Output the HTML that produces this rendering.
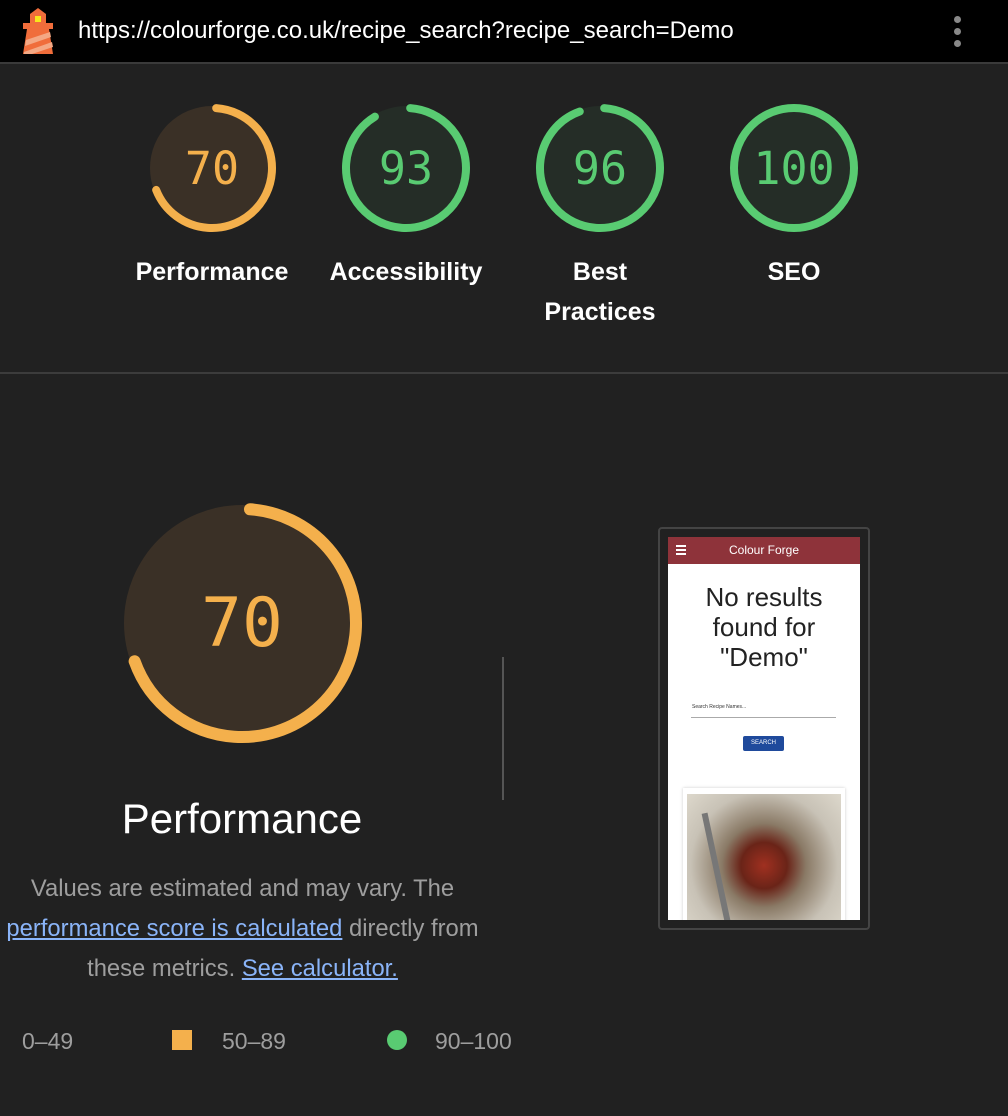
<!DOCTYPE html>
<html><head><meta charset="utf-8"><style>
body{margin:0;width:1008px;height:1116px;background:#212121;position:relative;overflow:hidden;font-family:"Liberation Sans",Arial,sans-serif}
.a{position:absolute}
.lbl{position:absolute;color:#fff;font-size:25px;text-align:center;width:200px;line-height:40px;font-weight:bold}
</style></head><body>
<div class="a" style="left:0;top:0;width:1008px;height:62px;background:#000;border-bottom:2px solid #3a3a3a"></div>
<svg class="a" style="left:22px;top:6px" width="32" height="50" viewBox="0 0 32 50">
<polygon points="8,8 16,2 24,8 24,17 8,17" fill="#f06d3b"/>
<rect x="13" y="10" width="6" height="6" fill="#f8e71c"/>
<rect x="1" y="17" width="30" height="6" fill="#f06d3b"/>
<polygon points="5,23 27,23 31,48 1,48" fill="#f06d3b"/>
<polygon points="4,34 28,26 29,31 3,40" fill="#f4a884"/>
<polygon points="2,46 30,36 31,41 10,48 2,48" fill="#f4a884"/>
</svg>
<div class="a" style="left:78px;top:17px;color:#fff;font-size:24px">https://colourforge.co.uk/recipe_search?recipe_search=Demo</div>
<div class="a" style="left:954px;top:16px;width:7px;height:7px;border-radius:50%;background:#888"></div>
<div class="a" style="left:954px;top:28px;width:7px;height:7px;border-radius:50%;background:#888"></div>
<div class="a" style="left:954px;top:40px;width:7px;height:7px;border-radius:50%;background:#888"></div>

<svg class="a" style="left:0;top:0" width="1008" height="800">
<g font-family="DejaVu Sans Mono,Liberation Mono,monospace" text-anchor="middle">
<circle cx="212" cy="168" r="62" fill="#3a3026"/>
<circle cx="212" cy="168" r="60" fill="none" stroke="#f4b04c" stroke-width="8" stroke-linecap="round" stroke-dasharray="256 400" transform="rotate(-86 212 168)"/>
<text x="212" y="184" font-size="45" fill="#f4b04c">70</text>
<circle cx="406" cy="168" r="62" fill="#252d27"/>
<circle cx="406" cy="168" r="60" fill="none" stroke="#59cb72" stroke-width="8" stroke-linecap="round" stroke-dasharray="340 400" transform="rotate(-86 406 168)"/>
<text x="406" y="184" font-size="45" fill="#59cb72">93</text>
<circle cx="600" cy="168" r="62" fill="#252d27"/>
<circle cx="600" cy="168" r="60" fill="none" stroke="#59cb72" stroke-width="8" stroke-linecap="round" stroke-dasharray="352 400" transform="rotate(-86 600 168)"/>
<text x="600" y="184" font-size="45" fill="#59cb72">96</text>
<circle cx="794" cy="168" r="60" fill="#252d27" stroke="#59cb72" stroke-width="8"/>
<text x="794" y="184" font-size="45" fill="#59cb72">100</text>
<circle cx="242" cy="623" r="118" fill="#3a3026"/>
<circle cx="242" cy="623" r="114" fill="none" stroke="#f4b04c" stroke-width="12" stroke-linecap="round" stroke-dasharray="490 800" transform="rotate(-86 242 623)"/>
<text x="242" y="646" font-size="68" fill="#f4b04c">70</text>
</g>
</svg>
<div class="lbl" style="left:112px;top:252px">Performance</div>
<div class="lbl" style="left:306px;top:252px">Accessibility</div>
<div class="lbl" style="left:500px;top:252px">Best<br>Practices</div>
<div class="lbl" style="left:694px;top:252px">SEO</div>
<div class="a" style="left:0;top:372px;width:1008px;height:2px;background:#3c3c3c"></div>

<div class="a" style="left:42px;top:795px;width:400px;text-align:center;color:#fff;font-size:42px">Performance</div>
<div class="a" style="left:-30px;top:869px;width:545px;text-align:center;color:#9e9e9e;font-size:23.8px;line-height:40px;white-space:nowrap">Values are estimated and may vary. The<br><span style="color:#8ab4f8;text-decoration:underline">performance score is calculated</span> directly from<br>these metrics. <span style="color:#8ab4f8;text-decoration:underline">See calculator.</span></div>
<div class="a" style="left:502px;top:657px;width:2px;height:143px;background:#555"></div>

<div class="a" style="left:22px;top:1028px;color:#9e9e9e;font-size:23px">0–49</div>
<div class="a" style="left:172px;top:1030px;width:20px;height:20px;background:#f4b04c"></div>
<div class="a" style="left:222px;top:1028px;color:#9e9e9e;font-size:23px">50–89</div>
<div class="a" style="left:387px;top:1030px;width:20px;height:20px;border-radius:50%;background:#59cb72"></div>
<div class="a" style="left:435px;top:1028px;color:#9e9e9e;font-size:23px">90–100</div>

<div class="a" style="left:658px;top:527px;width:208px;height:399px;border:2px solid #444;border-radius:4px"></div>
<div class="a" style="left:668px;top:537px;width:192px;height:383px;background:#fff;overflow:hidden">
 <div class="a" style="left:0;top:0;width:192px;height:27px;background:#8e333a;color:#fff;font-size:12px;text-align:center;line-height:27px">Colour Forge</div>
 <div class="a" style="left:8px;top:8px;width:10px;height:2px;background:#fff;box-shadow:0 4px #fff,0 8px #fff"></div>
 <div class="a" style="left:0;top:45px;width:192px;text-align:center;color:#222;font-size:26px;line-height:30px">No results<br>found for<br>"Demo"</div>
 <div class="a" style="left:24px;top:167px;font-size:5px;color:#333">Search Recipe Names...</div>
 <div class="a" style="left:23px;top:180px;width:145px;height:1px;background:#aaa"></div>
 <div class="a" style="left:75px;top:199px;width:41px;height:15px;background:#1f4a9c;border-radius:2px;color:#fff;font-size:6px;text-align:center;line-height:15px">SEARCH</div>
 <div class="a" style="left:15px;top:251px;width:162px;height:140px;box-shadow:0 0 3px #ccc"></div>
 <div class="a" style="left:19px;top:257px;width:154px;height:130px;background:radial-gradient(circle at 50% 55%,#a03020 0,#6a2418 22%,#8a7a66 40%,#c8c2b6 70%,#ddd8cc 100%)"></div>
 <div class="a" style="left:45px;top:275px;width:6px;height:110px;background:#777;transform:rotate(-12deg)"></div>
</div>
</body></html>
